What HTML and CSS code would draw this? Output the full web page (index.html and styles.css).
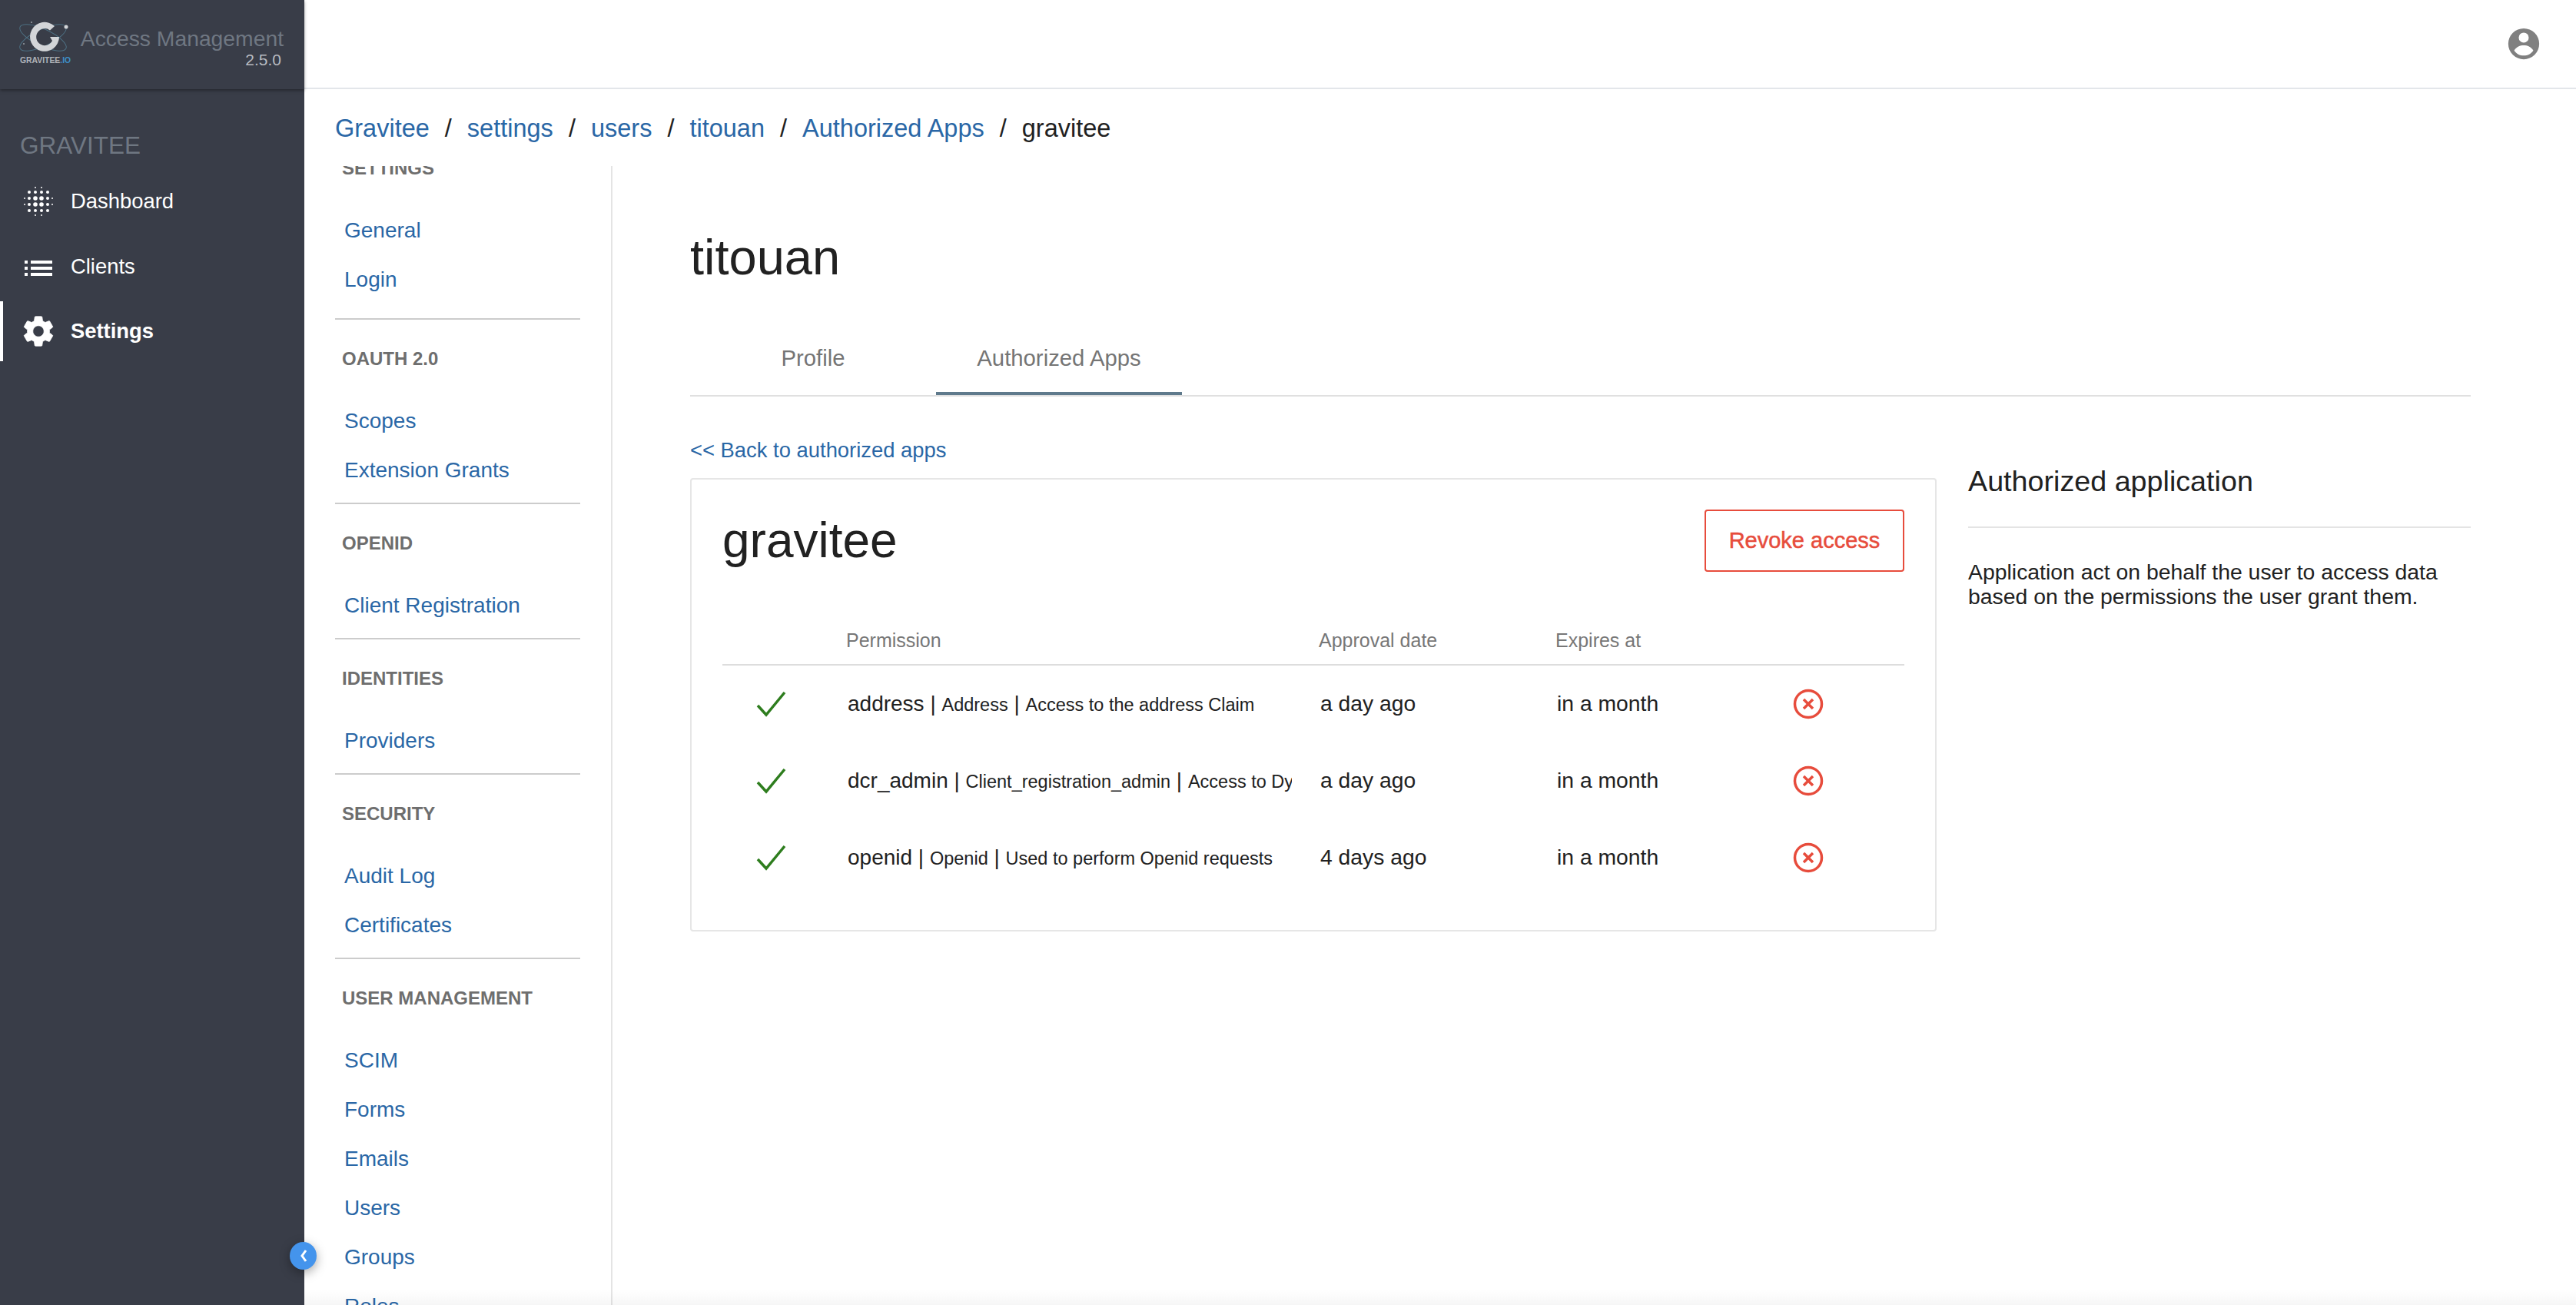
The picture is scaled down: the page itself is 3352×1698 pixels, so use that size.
FILE: index.html
```html
<!DOCTYPE html>
<html lang="en">
<head>
    <meta charset="UTF-8">
    <title>Gravitee Access Management</title>
    <link rel="stylesheet" href="styles.css">
</head>
<body>
    <aside class="sidebar">
        <div class="brand">
            <div class="logo">
                <svg class="logo-mark" width="64" height="46" viewBox="0 0 64 46">
                    <g fill="none" stroke="#4d6f82" stroke-width="1">
                        <ellipse cx="29" cy="23" rx="33" ry="11" transform="rotate(-25 29 23)"/>
                        <ellipse cx="29" cy="23" rx="33" ry="11" transform="rotate(25 29 23)"/>
                    </g>
                    <path d="M44 8A19 19 0 1 0 50 22L38 22L41 27A11 11 0 1 1 38 13.500Z" fill="#d3d5d8"/>
                    <circle cx="59" cy="9" r="2.500" fill="#d3d5d8"/>
                    <circle cx="14" cy="3" r="1" fill="#9aa0a6"/>
                    <circle cx="4" cy="31" r="1" fill="#9aa0a6"/>
                </svg>
                <div class="logo-text">GRAVITEE<span>.IO</span></div>
            </div>
            <div class="brand-name">
                <div class="product">Access Management</div>
                <div class="version">2.5.0</div>
            </div>
        </div>
        <div class="domain">GRAVITEE</div>
        <nav class="main-nav">
            <a class="nav-item">
                <svg class="nav-icon" width="40" height="40" viewBox="0 0 40 40" fill="#fff">
                    <circle cx="16" cy="2" r="1"/><circle cx="24" cy="2" r="1"/>
                    <circle cx="8" cy="8" r="2"/><circle cx="16" cy="8" r="2"/><circle cx="24" cy="8" r="2"/><circle cx="32" cy="8" r="2"/>
                    <circle cx="2" cy="16" r="1"/><circle cx="8" cy="16" r="2"/><circle cx="16" cy="16" r="2.800"/><circle cx="24" cy="16" r="2.800"/><circle cx="32" cy="16" r="2"/><circle cx="38" cy="16" r="1"/>
                    <circle cx="2" cy="24" r="1"/><circle cx="8" cy="24" r="2"/><circle cx="16" cy="24" r="2.800"/><circle cx="24" cy="24" r="2.800"/><circle cx="32" cy="24" r="2"/><circle cx="38" cy="24" r="1"/>
                    <circle cx="8" cy="32" r="2"/><circle cx="16" cy="32" r="2"/><circle cx="24" cy="32" r="2"/><circle cx="32" cy="32" r="2"/>
                    <circle cx="16" cy="38" r="1"/><circle cx="24" cy="38" r="1"/>
                </svg>
                <span>Dashboard</span>
            </a>
            <a class="nav-item">
                <svg class="nav-icon" width="40" height="40" viewBox="0 0 40 40" fill="#fff">
                    <path d="M2 12h4v4H2zM10 12h28v4H10zM2 20h4v4H2zM10 20h28v4H10zM2 28h4v4H2zM10 28h28v4H10z"/>
                </svg>
                <span>Clients</span>
            </a>
            <a class="nav-item active">
                <svg class="nav-icon" width="40" height="40" viewBox="2 2 20 20" fill="#fff" stroke="#fff" stroke-width="0.400">
                    <path d="M19.14 12.94c.04-.3.06-.61.06-.94 0-.32-.02-.64-.07-.94l2.03-1.58a.49.49 0 0 0 .12-.61l-1.92-3.32a.488.488 0 0 0-.59-.22l-2.39.96c-.5-.38-1.03-.7-1.62-.94l-.36-2.54a.484.484 0 0 0-.48-.41h-3.84c-.24 0-.43.17-.47.41l-.36 2.54c-.59.24-1.13.57-1.62.94l-2.39-.96c-.22-.08-.47 0-.59.22L2.74 8.87c-.12.21-.08.47.12.61l2.03 1.58c-.05.3-.09.63-.09.94s.02.64.07.94l-2.03 1.58a.49.49 0 0 0-.12.61l1.92 3.32c.12.22.37.29.59.22l2.39-.96c.5.38 1.03.7 1.62.94l.36 2.54c.05.24.24.41.48.41h3.84c.24 0 .44-.17.47-.41l.36-2.54c.59-.24 1.13-.56 1.62-.94l2.39.96c.22.08.47 0 .59-.22l1.92-3.32c.12-.22.07-.47-.12-.61l-2.01-1.58zM12 15.6c-1.98 0-3.6-1.62-3.6-3.6s1.62-3.6 3.6-3.6 3.6 1.62 3.6 3.6-1.62 3.6-3.6 3.6z"/>
                </svg>
                <span>Settings</span>
            </a>
        </nav>
        <button class="collapse">
            <svg width="12" height="20" viewBox="0 0 12 20"><path d="M9 3L4 10l5 7" fill="none" stroke="#fff" stroke-width="3"/></svg>
        </button>
    </aside>

    <div class="main">
        <header class="topbar">
            <svg width="46" height="46" viewBox="0 0 24 24" fill="#808080">
                <path fill-rule="evenodd" d="M12 1.500a10.500 10.500 0 1 0 0 21 10.500 10.500 0 0 0 0-21zM12 4.400a3.400 3.400 0 1 1 0 6.800 3.400 3.400 0 0 1 0-6.800zM5.500 16.500C7 14 9.500 13 12 13s5 1 6.500 3.500C17 18.700 14.700 20 12 20s-5-1.300-6.500-3.500z"/>
            </svg>
        </header>
        <div class="breadcrumb">
            <a>Gravitee</a><i>/</i><a>settings</a><i>/</i><a>users</a><i>/</i><a>titouan</a><i>/</i><a>Authorized Apps</a><i>/</i><span>gravitee</span>
        </div>
        <div class="workspace">
            <div class="submenu">
                <div class="submenu-list">
                    <h4>SETTINGS</h4>
                    <a>General</a>
                    <a>Login</a>
                    <hr class="first">
                    <h4>OAUTH 2.0</h4>
                    <a>Scopes</a>
                    <a>Extension Grants</a>
                    <hr>
                    <h4>OPENID</h4>
                    <a>Client Registration</a>
                    <hr>
                    <h4>IDENTITIES</h4>
                    <a>Providers</a>
                    <hr>
                    <h4>SECURITY</h4>
                    <a>Audit Log</a>
                    <a>Certificates</a>
                    <hr>
                    <h4>USER MANAGEMENT</h4>
                    <a>SCIM</a>
                    <a>Forms</a>
                    <a>Emails</a>
                    <a>Users</a>
                    <a>Groups</a>
                    <a>Roles</a>
                </div>
            </div>
            <main class="content">
                <h1>titouan</h1>
                <div class="tabs">
                    <a class="tab">Profile</a>
                    <a class="tab active">Authorized Apps</a>
                </div>
                <div class="columns">
                    <section class="left-col">
                        <a class="back-link">&lt;&lt; Back to authorized apps</a>
                        <div class="card">
                            <div class="card-head">
                                <h2>gravitee</h2>
                                <button class="revoke">Revoke access</button>
                            </div>
                            <table class="perms">
                                <thead>
                                    <tr>
                                        <th class="col-check"></th>
                                        <th class="col-perm">Permission</th>
                                        <th class="col-date">Approval date</th>
                                        <th class="col-exp">Expires at</th>
                                        <th></th>
                                    </tr>
                                </thead>
                                <tbody>
                                    <tr>
                                        <td class="check"><svg width="40" height="34" viewBox="0 0 40 34"><path d="M2 19l11 12L37 2" fill="none" stroke="#2e7d1e" stroke-width="3.500"/></svg></td>
                                        <td><div class="perm-text">address | <small>Address</small> | <small>Access to the address Claim</small></div></td>
                                        <td>a day ago</td>
                                        <td>in a month</td>
                                        <td class="remove"><svg width="40" height="40" viewBox="0 0 40 40"><circle cx="20" cy="20" r="17.500" fill="none" stroke="#e74c3c" stroke-width="3.500"/><path d="M14 14l12 12M26 14L14 26" stroke="#e74c3c" stroke-width="3.500"/></svg></td>
                                    </tr>
                                    <tr>
                                        <td class="check"><svg width="40" height="34" viewBox="0 0 40 34"><path d="M2 19l11 12L37 2" fill="none" stroke="#2e7d1e" stroke-width="3.500"/></svg></td>
                                        <td><div class="perm-text">dcr_admin | <small>Client_registration_admin</small> | <small>Access to Dynamic Client Registration</small></div></td>
                                        <td>a day ago</td>
                                        <td>in a month</td>
                                        <td class="remove"><svg width="40" height="40" viewBox="0 0 40 40"><circle cx="20" cy="20" r="17.500" fill="none" stroke="#e74c3c" stroke-width="3.500"/><path d="M14 14l12 12M26 14L14 26" stroke="#e74c3c" stroke-width="3.500"/></svg></td>
                                    </tr>
                                    <tr>
                                        <td class="check"><svg width="40" height="34" viewBox="0 0 40 34"><path d="M2 19l11 12L37 2" fill="none" stroke="#2e7d1e" stroke-width="3.500"/></svg></td>
                                        <td><div class="perm-text">openid | <small>Openid</small> | <small>Used to perform Openid requests</small></div></td>
                                        <td>4 days ago</td>
                                        <td>in a month</td>
                                        <td class="remove"><svg width="40" height="40" viewBox="0 0 40 40"><circle cx="20" cy="20" r="17.500" fill="none" stroke="#e74c3c" stroke-width="3.500"/><path d="M14 14l12 12M26 14L14 26" stroke="#e74c3c" stroke-width="3.500"/></svg></td>
                                    </tr>
                                </tbody>
                            </table>
                        </div>
                    </section>
                    <aside class="help">
                        <h3>Authorized application</h3>
                        <p>Application act on behalf the user to access data based on the permissions the user grant them.</p>
                    </aside>
                </div>
            </main>
        </div>
        <div class="bottom-fade"></div>
    </div>
</body>
</html>
```

FILE: styles.css
```css
* {
    box-sizing: border-box;
}
html, body {
    height: 100%;
}
body {
    margin: 0;
    display: flex;
    font-family: "Liberation Sans", Arial, sans-serif;
    font-size: 27.4px;
    color: #212121;
    background-color: white;
    overflow: hidden;
}
a {
    color: #2a67a6;
    text-decoration: none;
}

/* left sidebar */
.sidebar {
    width: 396px;
    flex-shrink: 0;
    background-color: #393d48;
    position: relative;
    z-index: 1;
}
.brand {
    height: 116px;
    padding: 26px 26px 0 26px;
    display: flex;
    justify-content: space-between;
    box-shadow: 0 2px 4px rgba(0, 0, 0, 0.35);
}
.logo {
    width: 66px;
    display: flex;
    flex-direction: column;
    align-items: center;
}
.logo-mark {
    overflow: visible;
}
.logo-text {
    font-size: 10.4px;
    font-weight: bold;
    color: #b0b3b8;
    white-space: nowrap;
    margin-top: 1px;
}
.logo-text span {
    color: #3d8fc9;
}
.brand-name {
    text-align: right;
    padding-right: 1px;
}
.product {
    font-size: 28.3px;
    line-height: 48px;
    color: #6f7782;
}
.version {
    font-size: 21px;
    line-height: 24px;
    margin-top: -8px;
    padding-right: 3px;
    color: #b8bbc0;
}
.domain {
    margin-top: 55px;
    padding-left: 26px;
    font-size: 31.5px;
    line-height: 36px;
    color: #6f7782;
}
.main-nav {
    margin-top: 16px;
    display: flex;
    flex-direction: column;
    gap: 6.5px;
}
.nav-item {
    height: 78px;
    padding-left: 30px;
    display: flex;
    align-items: center;
    gap: 22px;
    color: white;
}
.nav-item.active {
    border-left: 4px solid white;
    padding-left: 26px;
    font-weight: bold;
}
.collapse {
    position: absolute;
    top: 1616px;
    right: -16px;
    width: 35px;
    height: 36px;
    padding: 0;
    border: none;
    border-radius: 50%;
    background-color: #4494ec;
    box-shadow: 0 4px 14px rgba(0, 0, 0, 0.35);
    display: flex;
    align-items: center;
    justify-content: center;
}

/* main area */
.main {
    flex: 1;
    min-width: 0;
    display: flex;
    flex-direction: column;
    position: relative;
}
.topbar {
    height: 116px;
    flex-shrink: 0;
    border-bottom: 2px solid #e3e6ea;
    padding-right: 45px;
    display: flex;
    align-items: center;
    justify-content: flex-end;
}
.breadcrumb {
    height: 100px;
    flex-shrink: 0;
    padding: 32px 0 0 40px;
    font-size: 32.5px;
    line-height: 38px;
    white-space: nowrap;
}
.breadcrumb i {
    font-style: normal;
    margin: 0 20px;
}
.workspace {
    flex: 1;
    min-height: 0;
    display: flex;
}
.bottom-fade {
    position: absolute;
    left: 0;
    right: 0;
    bottom: 0;
    height: 20px;
    background: linear-gradient(to bottom, rgba(0, 0, 0, 0), rgba(0, 0, 0, 0.035));
}

.submenu {
    width: 401px;
    flex-shrink: 0;
    border-right: 2px solid #e4e4e4;
    overflow: hidden;
}
.submenu-list {
    margin-top: -20px;
    padding: 0 40px 0 52px;
    display: flex;
    flex-direction: column;
    font-size: 28px;
}
.submenu-list h4 {
    margin: 0 0 0 -3px;
    height: 46px;
    line-height: 46px;
    font-size: 24px;
    color: #6e6e6e;
}
.submenu-list a {
    height: 64px;
    line-height: 64px;
    white-space: nowrap;
}
.submenu-list h4 + a {
    margin-top: 26px;
}
.submenu-list hr {
    margin: 10px 0 28px -12px;
    width: auto;
    border: none;
    border-top: 2px solid #ccc;
}
.submenu-list hr.first {
    margin-top: 18px;
}

.content {
    flex: 1;
    min-width: 0;
    padding: 0 137px 0 101px;
}
.content h1 {
    margin: 81px 0 0 0;
    font-size: 65px;
    line-height: 76px;
    font-weight: normal;
}
.tabs {
    margin-top: 73px;
    display: flex;
    border-bottom: 2px solid #e0e0e0;
}
.tab {
    width: 320px;
    height: 68px;
    line-height: 40px;
    font-size: 29.3px;
    text-align: center;
    color: #757575;
}
.tab.active {
    border-bottom: 4px solid #5f7a8c;
}

.columns {
    margin-top: 52px;
    display: flex;
    gap: 41px;
}
.left-col {
    width: 1622px;
    flex-shrink: 0;
}
.back-link {
    display: block;
    height: 54px;
    line-height: 36px;
}
.card {
    height: 590px;
    border: 2px solid #e6e6e6;
    border-radius: 4px;
    padding: 0 40px;
}
.card-head {
    height: 191px;
    padding-top: 39px;
    display: flex;
    justify-content: space-between;
    align-items: flex-start;
}
.card-head h2 {
    margin: 0;
    font-size: 64px;
    line-height: 80px;
    font-weight: normal;
}
.revoke {
    width: 260px;
    height: 81px;
    font-family: inherit;
    font-size: 29px;
    color: #e74c3c;
    background-color: white;
    border: 2px solid #e74c3c;
    border-radius: 4px;
    -webkit-text-stroke: 0.5px #e74c3c;
}

.perms {
    width: 100%;
    table-layout: fixed;
    border-collapse: collapse;
    font-size: 28.3px;
}
.perms th {
    height: 50px;
    padding: 0 0 12px 1px;
    font-size: 25px;
    font-weight: normal;
    text-align: left;
    color: #777;
    border-bottom: 2px solid #ddd;
}
.col-check {
    width: 160px;
}
.col-perm {
    width: 615px;
}
.col-date {
    width: 308px;
}
.col-exp {
    width: 300px;
}
.perms td {
    height: 100.4px;
    padding: 0 0 0 3px;
}
.perm-text {
    width: 578px;
    overflow: hidden;
    white-space: nowrap;
    font-size: 28px;
}
.perm-text small {
    font-size: 23.5px;
}
.perms td.check {
    padding: 0 0 0 44px;
}
.perms td.remove {
    padding: 0 0 0 10px;
}
.perms svg {
    display: block;
}

.help {
    flex: 1;
    padding-top: 36px;
}
.help h3 {
    margin: 0;
    height: 83px;
    font-size: 37.7px;
    line-height: 44px;
    font-weight: normal;
    border-bottom: 2px solid #e4e4e4;
}
.help p {
    margin: 41px 0 0 0;
    font-size: 28.4px;
    line-height: 32px;
}
```
